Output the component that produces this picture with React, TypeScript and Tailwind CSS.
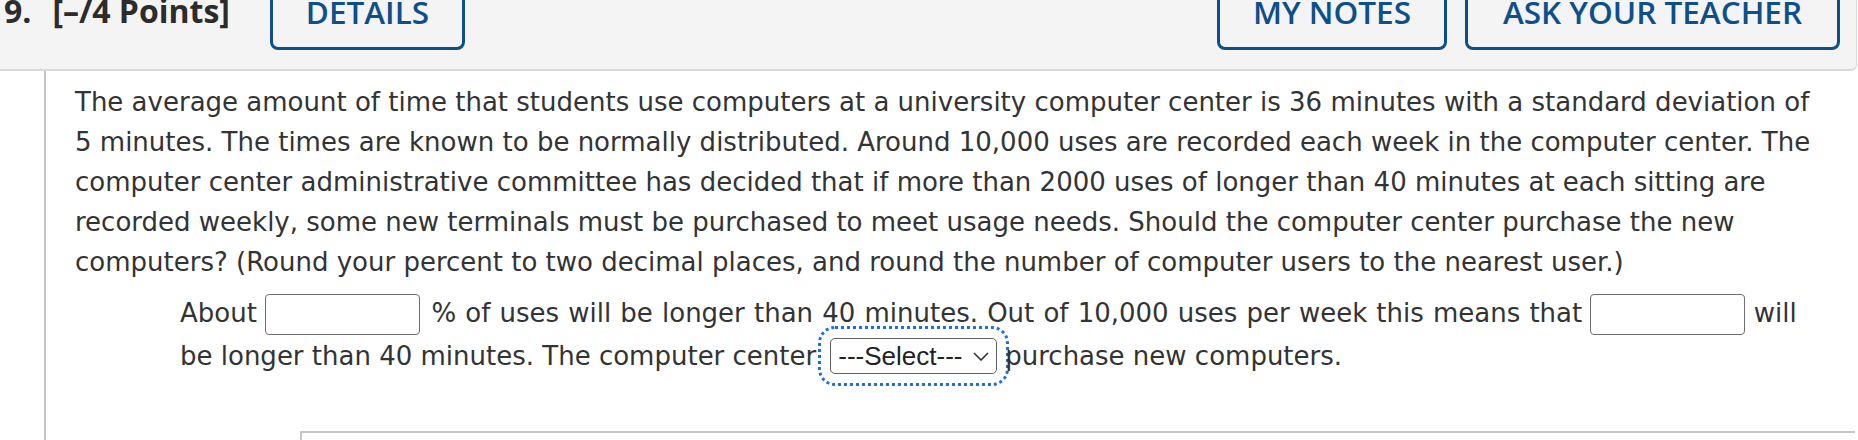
import { ReactNode } from 'react'

function HeaderButton({ width, children }: { width: string; children: ReactNode }) {
  return (
    <div
      className={`${width} -mt-[26px] h-[76px] flex items-center justify-center border-[3px] border-[#0d4f8b] rounded-b-[8px] text-[#0d4f8b] text-[31.5px] font-semibold leading-none`}
    >
      {children}
    </div>
  )
}

function Blank() {
  return (
    <span className="inline-block align-middle w-[155px] h-[41px] border-[1.5px] border-[#6e6e6e] rounded-[4px] bg-white" />
  )
}

const paragraph = [
  'The average amount of time that students use computers at a university computer center is 36 minutes with a standard deviation of',
  '5 minutes. The times are known to be normally distributed. Around 10,000 uses are recorded each week in the computer center. The',
  'computer center administrative committee has decided that if more than 2000 uses of longer than 40 minutes at each sitting are',
  'recorded weekly, some new terminals must be purchased to meet usage needs. Should the computer center purchase the new',
  'computers? (Round your percent to two decimal places, and round the number of computer users to the nearest user.)',
]

export default function App() {
  return (
    <div className="w-[1858px] h-[440px] overflow-hidden bg-white">
      {/* Question header */}
      <div className="flex items-start h-[71px] mr-[1px] bg-[#f4f4f4] border-b-2 border-r border-[#d9d9d9] rounded-br-[6px] font-['Open_Sans',sans-serif]">
        <div className="w-[270px] pl-[4px] -mt-[5px] flex gap-[21px] text-[32px] font-bold leading-[32px] text-[#2c2c2c]">
          <span>9.</span>
          <span>[–/4 Points]</span>
        </div>
        <HeaderButton width="w-[195px]">DETAILS</HeaderButton>
        <div className="ml-auto flex gap-[18px] pr-[16px]">
          <HeaderButton width="w-[230px]">MY NOTES</HeaderButton>
          <HeaderButton width="w-[375px]">ASK YOUR TEACHER</HeaderButton>
        </div>
      </div>

      {/* Question body */}
      <div className="flex h-[369px]">
        <div className="w-[44px] shrink-0" />
        <div className="flex-1 mr-[3px] flex flex-col border-l-2 border-[#c4c4c4] font-['DejaVu_Sans',Verdana,sans-serif] text-[26px] text-[#333333]">
          <div className="pl-[29px] pt-[11px] leading-[40px] whitespace-nowrap">
            {paragraph.map(line => (
              <div key={line}>{line}</div>
            ))}
          </div>

          <div className="pl-[134px] mt-[10px] leading-[43px] whitespace-nowrap">
            <div>
              About <Blank />{' '}
              <span className="ml-[3px] [word-spacing:0.9px]">
                % of uses will be longer than 40 minutes. Out of 10,000 uses per week this means that
              </span>{' '}
              <Blank /> will
            </div>
            <div>
              be longer than 40 minutes. The computer center
              <span className="inline-flex items-center ml-[14px] mr-[8px] w-[167px] h-[36px] pl-[7px] border-[1.5px] border-[#5f5f5f] rounded-[5px] outline-[3px] outline-dotted outline-[#1b6fd8] outline-offset-[9px] font-['Liberation_Sans',Arial,sans-serif] text-[26px] leading-none text-[#222222]">
                <span>---Select---</span>
                <svg className="ml-auto mr-[7px]" width="16" height="9" viewBox="0 0 16 9" fill="none" stroke="#333" strokeWidth="1.6">
                  <path d="M1 1l7 7 7-7" />
                </svg>
              </span>
              purchase new computers.
            </div>
          </div>

          <div className="mt-auto flex">
            <div className="w-[254px] shrink-0" />
            <div className="flex-1 h-[9px] border-t-2 border-l-2 border-[#c4c4c4]" />
          </div>
        </div>
      </div>
    </div>
  )
}
